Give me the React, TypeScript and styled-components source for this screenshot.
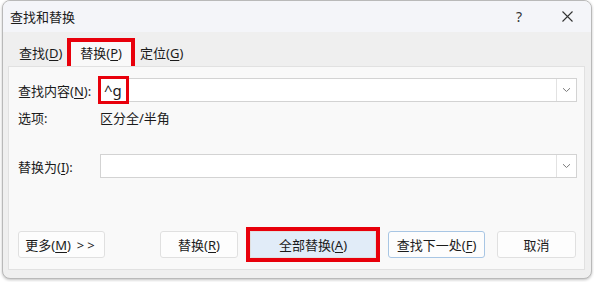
import React from 'react';
import styled, { createGlobalStyle, css } from 'styled-components';

const GlobalStyle = createGlobalStyle`
  html, body {
    margin: 0;
    padding: 0;
    background: #ffffff;
  }
  body {
    font-family: "Noto Sans", "Noto Sans CJK SC", sans-serif;
    font-size: 13px;
    color: #1b1b1b;
  }
  u {
    text-underline-offset: 2px;
  }
`;

const redBox = css`
  outline: 4px solid #e8000b;
`;

const Page = styled.div`
  width: 594px;
  height: 282px;
  padding: 0 0 0 2px;
  box-sizing: border-box;
`;

const Window = styled.div`
  width: 590px;
  height: 279px;
  box-sizing: border-box;
  border: 1px solid #b9b9b9;
  border-radius: 8px;
  background: #efefef;
  overflow: hidden;
  display: flex;
  flex-direction: column;
  box-shadow: 0 1px 3px rgba(0, 0, 0, 0.25);
`;

const TitleBar = styled.div`
  height: 31px;
  display: flex;
  align-items: center;
  justify-content: space-between;
  padding-left: 7px;
  background: #f4f5f9;
`;

const Title = styled.span`
  font-size: 13px;
`;

const Controls = styled.div`
  display: flex;
  height: 100%;
`;

const ControlButton = styled.div`
  width: 48px;
  height: 100%;
  display: flex;
  align-items: center;
  justify-content: center;
  font-size: 14px;
  color: #333;
`;

const TabStrip = styled.div`
  height: 34px;
  display: flex;
  align-items: flex-end;
  padding-left: 7px;
`;

const Tab = styled.div<{ $marked?: boolean }>`
  height: 24px;
  line-height: 23px;
  padding: 0 9px;
  background: ${p => (p.$marked ? '#f9f9f9' : 'transparent')};
  ${p => p.$marked && redBox}
`;

const Panel = styled.div`
  margin: 0 6px 0 5px;
  height: 204px;
  box-sizing: border-box;
  background: #f9f9f9;
  border: 1px solid #e1e1e1;
  padding: 11px 7px 11px 9px;
  display: flex;
  flex-direction: column;
`;

const FieldRow = styled.div<{ $gap?: number }>`
  display: grid;
  grid-template-columns: 82px 1fr;
  align-items: center;
  margin-top: ${p => p.$gap ?? 0}px;
`;

const Label = styled.span`
  white-space: nowrap;
`;

const ComboBox = styled.div`
  height: 24px;
  box-sizing: border-box;
  border: 1px solid #d3d3d3;
  background: #ffffff;
  display: flex;
  align-items: center;
`;

const ComboValue = styled.div`
  flex: 1;
  height: 100%;
  display: flex;
  align-items: center;
`;

const Marked = styled.span`
  display: inline-flex;
  align-items: center;
  height: 22px;
  padding: 0 4px 0 3px;
  font-size: 15px;
  outline: 3px solid #e8000b;
`;

const DropButton = styled.div`
  width: 19px;
  height: 100%;
  border-left: 1px solid #e2e2e2;
  display: flex;
  align-items: center;
  justify-content: center;
`;

const OptionsRow = styled(FieldRow)`
  height: 22px;
`;

const ButtonBar = styled.div`
  margin-top: auto;
  display: flex;
  align-items: center;
  justify-content: space-between;
  padding-right: 1px;
`;

const ButtonGroup = styled.div`
  display: flex;
  gap: 12px;
`;

const Button = styled.button<{ $width: number; $primary?: boolean; $marked?: boolean }>`
  width: ${p => p.$width}px;
  height: 27px;
  box-sizing: border-box;
  font: inherit;
  font-size: 13px;
  color: #1b1b1b;
  border-radius: 3px;
  border: 1px solid ${p => (p.$primary ? '#a8c6e4' : '#e0e0e0')};
  background: ${p => (p.$marked ? '#e1ecf8' : '#fdfdfd')};
  padding: 0;
  ${p => p.$marked && redBox}
  ${p => p.$marked && css`border-radius: 0;`}
`;

const Arrows = styled.span`
  margin-left: 6px;
  letter-spacing: 3px;
`;

const Chevron = () => (
  <svg width="9" height="6" viewBox="0 0 9 6">
    <path d="M1 1.2 L4.5 4.5 L8 1.2" fill="none" stroke="#7a7a7a" strokeWidth="1" />
  </svg>
);

const CloseIcon = () => (
  <svg width="11" height="11" viewBox="0 0 11 11">
    <path d="M0.5 0.5 L10.5 10.5 M10.5 0.5 L0.5 10.5" stroke="#333" strokeWidth="1.1" />
  </svg>
);

const App: React.FC = () => (
  <Page>
    <GlobalStyle />
    <Window>
      <TitleBar>
        <Title>查找和替换</Title>
        <Controls>
          <ControlButton>?</ControlButton>
          <ControlButton>
            <CloseIcon />
          </ControlButton>
        </Controls>
      </TitleBar>
      <TabStrip>
        <Tab>查找(<u>D</u>)</Tab>
        <Tab $marked>替换(<u>P</u>)</Tab>
        <Tab>定位(<u>G</u>)</Tab>
      </TabStrip>
      <Panel>
        <FieldRow>
          <Label>查找内容(<u>N</u>):</Label>
          <ComboBox>
            <ComboValue>
              <Marked>^g</Marked>
            </ComboValue>
            <DropButton>
              <Chevron />
            </DropButton>
          </ComboBox>
        </FieldRow>
        <OptionsRow $gap={4}>
          <Label>选项:</Label>
          <span>区分全/半角</span>
        </OptionsRow>
        <FieldRow $gap={26}>
          <Label>替换为(<u>I</u>):</Label>
          <ComboBox>
            <ComboValue />
            <DropButton>
              <Chevron />
            </DropButton>
          </ComboBox>
        </FieldRow>
        <ButtonBar>
          <Button $width={87}>更多(<u>M</u>)<Arrows>&gt;&gt;</Arrows></Button>
          <ButtonGroup>
            <Button $width={78}>替换(<u>R</u>)</Button>
            <Button $width={126} $marked>全部替换(<u>A</u>)</Button>
            <Button $width={97} $primary>查找下一处(<u>F</u>)</Button>
            <Button $width={79}>取消</Button>
          </ButtonGroup>
        </ButtonBar>
      </Panel>
    </Window>
  </Page>
);

export default App;
